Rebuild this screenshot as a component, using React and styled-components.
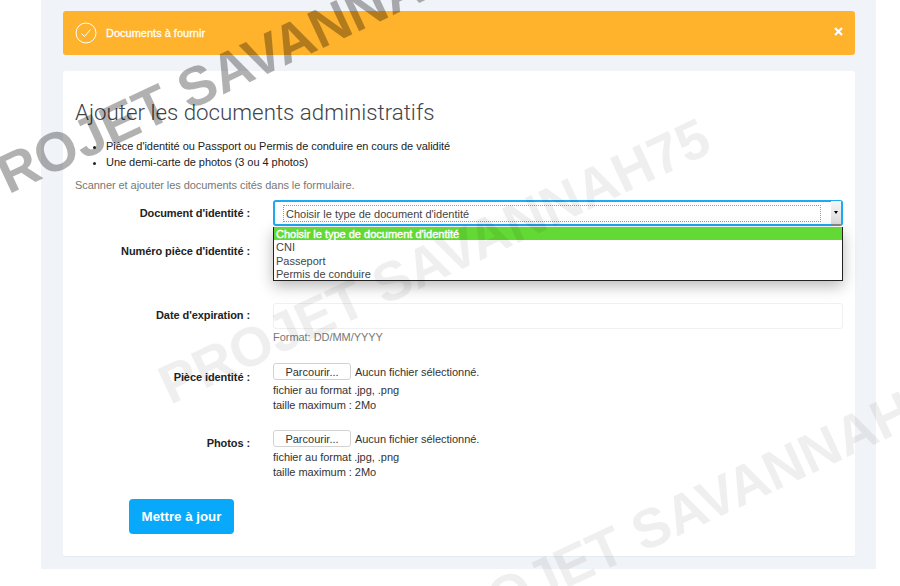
import React from 'react'
import styled, { createGlobalStyle } from 'styled-components'

const GlobalStyle = createGlobalStyle`
  html, body {
    margin: 0;
    padding: 0;
    background: #fff;
    height: 586px;
    overflow: hidden;
    font-family: "Liberation Sans", Arial, sans-serif;
  }
`

const Page = styled.div`
  position: relative;
  width: 900px;
  height: 586px;
  overflow: hidden;
`

const Container = styled.div`
  width: 835px;
  height: 569px;
  margin-left: 41px;
  padding: 11px 21px 12px 22px;
  box-sizing: border-box;
  background: #f0f3f7;
  display: flex;
  flex-direction: column;
  gap: 16px;
`

const Alert = styled.div`
  height: 44px;
  flex: none;
  background: #ffb22b;
  border-radius: 3px;
  padding: 0 12px;
  display: flex;
  align-items: center;
  gap: 9px;
  color: #fff;
  font-size: 11px;
  -webkit-text-stroke: 0.3px #fff;
`

const AlertText = styled.span`
  flex: 1;
  padding-bottom: 1px;
`

const Close = styled.svg`
  width: 9px;
  height: 9px;
  margin: 0 0 3px;
`

const Card = styled.div`
  flex: 1;
  background: #fff;
  border-radius: 3px;
  border-bottom: 1px solid #e6ebf0;
  padding: 27px 12px 0;
`

const Title = styled.h1`
  margin: 0 0 12px;
  font-family: Roboto, "Liberation Sans", sans-serif;
  font-size: 22.3px;
  line-height: 28px;
  font-weight: 300;
  color: #3f444a;
`

const List = styled.ul`
  margin: 0 0 7px;
  padding: 0 0 0 31px;
  font-size: 11px;
  line-height: 16px;
  letter-spacing: -0.04px;
  color: #222;
`

const Intro = styled.p`
  margin: 0 0 7px;
  font-size: 11px;
  line-height: 16px;
  letter-spacing: -0.06px;
  color: #777;
`

const Row = styled.div`
  display: flex;
  gap: 23px;
  margin-bottom: ${(p) => p.$after}px;
`

const Label = styled.label`
  width: 175px;
  flex: none;
  text-align: right;
  font-size: 11px;
  font-weight: 700;
  letter-spacing: -0.08px;
  color: #222;
  line-height: 14px;
  padding-top: ${(p) => p.$top}px;
`

const Field = styled.div`
  width: 570px;
  position: relative;
`

const SelectBox = styled.div`
  height: 26px;
  box-sizing: border-box;
  border: 2px solid #1eaaf1;
  border-radius: 3px;
  display: flex;
  align-items: center;
  padding-left: 8px;
  background: #fff;
`

const SelectValue = styled.div`
  flex: 1;
  height: 15px;
  border: 1px dotted #999;
  font-size: 11px;
  line-height: 16px;
  padding-left: 2px;
  color: #444;
`

const SelectArrow = styled.div`
  width: 10px;
  height: 24px;
  margin-left: 10px;
  background: linear-gradient(#f6f6f6, #dcdcdc);
  border-bottom: 1px solid #888;
  box-sizing: border-box;
  display: flex;
  align-items: center;
  justify-content: center;
  &::after {
    content: '';
    border-left: 2.5px solid transparent;
    border-right: 2.5px solid transparent;
    border-top: 3px solid #000;
  }
`

const Dropdown = styled.div`
  position: absolute;
  top: 27px;
  left: 0;
  right: 0;
  height: 54px;
  box-sizing: border-box;
  background: #fff;
  border: 1px solid #222;
  border-top: none;
  box-shadow: 0 5px 14px rgba(0, 0, 0, 0.28);
  z-index: 2;
`

const Option = styled.div`
  height: 13.3px;
  line-height: 14px;
  font-size: 11px;
  padding-left: 2px;
  color: ${(p) => (p.$active ? '#fff' : '#444')};
  -webkit-text-stroke: ${(p) => (p.$active ? '0.4px #fff' : '0')};
  background: ${(p) => (p.$active ? '#62d934' : 'transparent')};
`

const Input = styled.div`
  height: 26px;
  box-sizing: border-box;
  border: 1px solid #f0f0f0;
  border-radius: 3px;
  background: #fff;
`

const Help = styled.div`
  font-size: 11px;
  line-height: ${(p) => (p.$muted ? 16 : 15)}px;
  letter-spacing: -0.04px;
  color: ${(p) => (p.$muted ? '#777' : '#333')};
`

const FileLine = styled.div`
  display: flex;
  align-items: center;
  gap: 4px;
  height: 17px;
  margin-bottom: 3px;
  font-size: 11px;
  letter-spacing: -0.04px;
  color: #333;
`

const FileButton = styled.button`
  width: 78px;
  height: 17px;
  box-sizing: border-box;
  padding: 0;
  background: #fff;
  border: 1px solid #d2d2d2;
  border-radius: 3px;
  font-family: inherit;
  font-size: 11px;
  color: #333;
`

const Submit = styled.button`
  display: block;
  width: 105px;
  height: 35px;
  margin-left: 54px;
  padding: 0;
  border: none;
  border-radius: 4px;
  background: #08a9fb;
  color: #fff;
  font-family: inherit;
  font-size: 13.3px;
  font-weight: 700;
`

const Watermark = styled.div`
  position: absolute;
  left: ${(p) => p.$x}px;
  top: ${(p) => p.$y}px;
  transform: rotate(-25deg);
  transform-origin: 0 100%;
  font-size: 55px;
  line-height: 60px;
  font-weight: 700;
  white-space: nowrap;
  color: #000;
  opacity: ${(p) => p.$alpha};
  pointer-events: none;
  z-index: 5;
`

const FileField = () => (
  <Field>
    <FileLine>
      <FileButton type="button">Parcourir...</FileButton>
      Aucun fichier sélectionné.
    </FileLine>
    <Help>fichier au format .jpg, .png</Help>
    <Help>taille maximum : 2Mo</Help>
  </Field>
)

export default function App() {
  return (
    <Page>
      <GlobalStyle />
      <Container>
        <Alert>
          <svg width="22" height="22" viewBox="0 0 22 22" fill="none" stroke="#fff" strokeWidth="1">
            <circle cx="11" cy="11" r="10" />
            <path d="M6.5 11.5l3 3 6-7" />
          </svg>
          <AlertText>Documents à fournir</AlertText>
          <Close viewBox="0 0 9 9" stroke="#fff" strokeWidth="2.2">
            <path d="M1 1l7 7M8 1l-7 7" />
          </Close>
        </Alert>
        <Card>
          <Title>Ajouter les documents administratifs</Title>
          <List>
            <li>Pièce d'identité ou Passport ou Permis de conduire en cours de validité</li>
            <li>Une demi-carte de photos (3 ou 4 photos)</li>
          </List>
          <Intro>Scanner et ajouter les documents cités dans le formulaire.</Intro>
          <Row $after={12}>
            <Label $top={6}>Document d'identité :</Label>
            <Field>
              <SelectBox>
                <SelectValue>Choisir le type de document d'identité</SelectValue>
                <SelectArrow />
              </SelectBox>
              <Dropdown>
                <Option $active>Choisir le type de document d'identité</Option>
                <Option>CNI</Option>
                <Option>Passeport</Option>
                <Option>Permis de conduire</Option>
              </Dropdown>
            </Field>
          </Row>
          <Row $after={39}>
            <Label $top={6}>Numéro pièce d'identité :</Label>
            <Field>
              <Input />
            </Field>
          </Row>
          <Row $after={18}>
            <Label $top={5}>Date d'expiration :</Label>
            <Field>
              <Input />
              <Help $muted>Format: DD/MM/YYYY</Help>
            </Field>
          </Row>
          <Row $after={17}>
            <Label $top={7}>Pièce identité :</Label>
            <FileField />
          </Row>
          <Row $after={19}>
            <Label $top={6}>Photos :</Label>
            <FileField />
          </Row>
          <Submit type="button">Mettre à jour</Submit>
        </Card>
      </Container>
      <Watermark $x={-20} $y={160} $alpha={0.3}>PROJET SAVANNAH75</Watermark>
      <Watermark $x={175} $y={355} $alpha={0.06}>PROJET SAVANNAH75</Watermark>
      <Watermark $x={434} $y={602} $alpha={0.06}>PROJET SAVANNAH75</Watermark>
    </Page>
  )
}
